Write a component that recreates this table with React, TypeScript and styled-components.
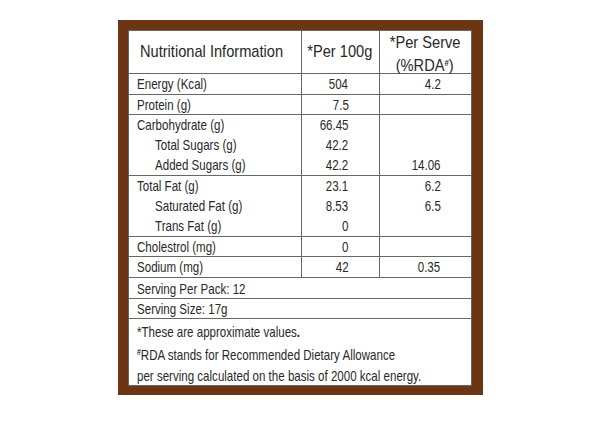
import React from "react";
import styled, { createGlobalStyle } from "styled-components";

const Global = createGlobalStyle`
  html, body { margin: 0; padding: 0; background: #ffffff; }
  body { font-family: "Liberation Sans", Arial, sans-serif; }
`;

const Page = styled.div`
  width: 600px;
  height: 426px;
  padding-top: 20px;
  box-sizing: border-box;
  display: flex;
  justify-content: center;
  align-items: flex-start;
`;

const Frame = styled.div`
  width: 365px;
  box-sizing: border-box;
  background: #6b3412;
  padding: 10px 11px 9px 10px;
`;

const Table = styled.div`
  background: #ffffff;
  border: 1px solid #666666;
  color: #282828;
  font-size: 15px;
`;

const Row = styled.div<{ $h: number }>`
  display: grid;
  grid-template-columns: 173px 78px 1fr;
  height: ${(p) => p.$h}px;
  box-sizing: border-box;
  border-bottom: 1px solid #666666;
`;

const FullRow = styled.div<{ $h: number }>`
  height: ${(p) => p.$h}px;
  box-sizing: border-box;
  border-bottom: 1px solid #666666;
  display: flex;
  align-items: center;
  padding-left: 8px;
`;

type Align = "left" | "right" | "center";

const Cell = styled.div<{ $align?: Align; $last?: boolean }>`
  display: flex;
  flex-direction: column;
  justify-content: center;
  align-items: ${(p) =>
    p.$align === "right" ? "flex-end" : p.$align === "center" ? "center" : "flex-start"};
  border-right: ${(p) => (p.$last ? "none" : "1px solid #666666")};
  padding: ${(p) =>
    p.$align === "right" ? "0 30px 0 0" : p.$align === "center" ? "0" : "0 0 0 8px"};
`;

const HeadCell = styled(Cell)<{ $top?: number }>`
  font-size: 17px;
  padding-top: ${(p) => p.$top ?? 0}px;
`;

const Line = styled.div<{ $indent?: boolean; $h?: number }>`
  line-height: ${(p) => p.$h ?? 20}px;
  height: ${(p) => p.$h ?? 20}px;
  white-space: nowrap;
  padding-left: ${(p) => (p.$indent ? "18px" : "0")};
`;

/* condensed face: the label uses a narrow grotesque, so the regular face is narrowed */
const Narrow = styled.span<{ $origin?: Align; $scale?: number }>`
  display: inline-block;
  white-space: nowrap;
  transform: scaleX(${(p) => p.$scale ?? 0.77});
  transform-origin: ${(p) => p.$origin ?? "left"} center;
`;

const Notes = styled.div`
  height: 66px;
  padding: 2px 0 0 8px;
  box-sizing: border-box;
`;

const NoteLine = styled.div`
  line-height: 21px;
  white-space: nowrap;
`;

const Sup = styled.span`
  font-size: 9px;
  vertical-align: 5px;
  font-weight: bold;
`;

type Item = { name: string; indent?: boolean; per100: string; rda: string };
type Group = { h: number; items: Item[] };

const groups: Group[] = [
  { h: 21, items: [{ name: "Energy (Kcal)", per100: "504", rda: "4.2" }] },
  { h: 20, items: [{ name: "Protein (g)", per100: "7.5", rda: "" }] },
  {
    h: 61,
    items: [
      { name: "Carbohydrate (g)", per100: "66.45", rda: "" },
      { name: "Total Sugars (g)", indent: true, per100: "42.2", rda: "" },
      { name: "Added Sugars (g)", indent: true, per100: "42.2", rda: "14.06" },
    ],
  },
  {
    h: 61,
    items: [
      { name: "Total Fat (g)", per100: "23.1", rda: "6.2" },
      { name: "Saturated Fat (g)", indent: true, per100: "8.53", rda: "6.5" },
      { name: "Trans Fat (g)", indent: true, per100: "0", rda: "" },
    ],
  },
  { h: 20, items: [{ name: "Cholestrol (mg)", per100: "0", rda: "" }] },
  { h: 21, items: [{ name: "Sodium (mg)", per100: "42", rda: "0.35" }] },
];

export default function App() {
  return (
    <>
      <Global />
      <Page>
        <Frame>
          <Table>
            <Row $h={43}>
              <HeadCell>
                <Line style={{ paddingLeft: 3 }}>
                  <Narrow $scale={0.86}>Nutritional Information</Narrow>
                </Line>
              </HeadCell>
              <HeadCell $align="center">
                <Line>
                  <Narrow $scale={0.86} $origin="center">*Per 100g</Narrow>
                </Line>
              </HeadCell>
              <HeadCell $align="center" $last $top={2}>
                <Line>
                  <Narrow $scale={0.86} $origin="center">*Per Serve</Narrow>
                </Line>
                <Line>
                  <Narrow $scale={0.86} $origin="center">
                    (%RDA<Sup>#</Sup>)
                  </Narrow>
                </Line>
              </HeadCell>
            </Row>
            {groups.map((g, i) => (
              <Row key={i} $h={g.h}>
                <Cell>
                  {g.items.map((it) => (
                    <Line key={it.name} $indent={it.indent}>
                      <Narrow>{it.name}</Narrow>
                    </Line>
                  ))}
                </Cell>
                <Cell $align="right">
                  {g.items.map((it) => (
                    <Line key={it.name}>
                      <Narrow $origin="right">{it.per100}</Narrow>
                    </Line>
                  ))}
                </Cell>
                <Cell $align="right" $last>
                  {g.items.map((it) => (
                    <Line key={it.name}>
                      <Narrow $origin="right">{it.rda}</Narrow>
                    </Line>
                  ))}
                </Cell>
              </Row>
            ))}
            <FullRow $h={21}>
              <Narrow>Serving Per Pack: 12</Narrow>
            </FullRow>
            <FullRow $h={20}>
              <Narrow>Serving Size: 17g</Narrow>
            </FullRow>
            <Notes>
              <NoteLine>
                <Narrow>
                  *These are approximate values<b>.</b>
                </Narrow>
              </NoteLine>
              <NoteLine>
                <Narrow>
                  <Sup>#</Sup>RDA stands for Recommended Dietary Allowance
                </Narrow>
              </NoteLine>
              <NoteLine>
                <Narrow>per serving calculated on the basis of 2000 kcal energy.</Narrow>
              </NoteLine>
            </Notes>
          </Table>
        </Frame>
      </Page>
    </>
  );
}
